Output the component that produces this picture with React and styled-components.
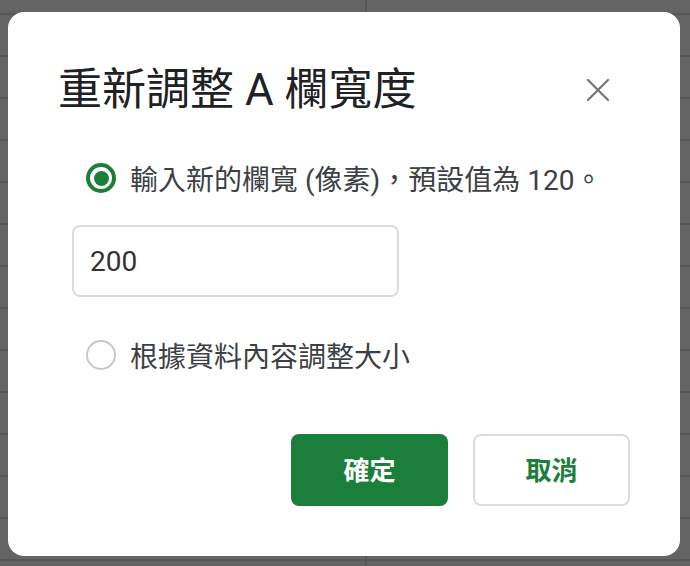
import React from 'react';
import styled, { createGlobalStyle } from 'styled-components';

const GlobalStyle = createGlobalStyle`
  html, body {
    margin: 0;
    padding: 0;
    height: 100%;
  }
  body {
    font-family: Roboto, "Noto Sans CJK TC", "Noto Sans", sans-serif;
  }
`;

const Backdrop = styled.div`
  width: 100vw;
  height: 100vh;
  box-sizing: border-box;
  padding: 12px 10px 10px 8px;
  display: flex;
  background-color: #646464;
  background-image:
    linear-gradient(to right, transparent 365px, #575757 365px, #575757 367px, transparent 367px),
    repeating-linear-gradient(to bottom, transparent 0, transparent 13px, #575757 13px, #575757 15px, transparent 15px, transparent 42px);
`;

const Dialog = styled.div`
  flex: 1;
  background: #ffffff;
  border-radius: 16px;
  box-sizing: border-box;
  padding: 52px 50px 50px;
  display: flex;
  flex-direction: column;
`;

const Header = styled.div`
  display: flex;
  align-items: center;
  justify-content: space-between;
  height: 52px;
  padding-right: 12px;
`;

const Title = styled.h1`
  margin: 0;
  font-size: 44px;
  font-weight: 400;
  line-height: 52px;
  color: #202124;
`;

const CloseButton = styled.button`
  width: 40px;
  height: 40px;
  border: none;
  background: none;
  padding: 0;
  display: flex;
  align-items: center;
  justify-content: center;
  color: #757575;
  cursor: pointer;
`;

const Option = styled.label`
  display: flex;
  align-items: center;
  gap: 14px;
  height: 40px;
  margin: ${({ top }) => top}px 0 0 28px;
  font-size: 28px;
  color: #3c4043;
  cursor: pointer;
`;

const RadioMark = styled.span`
  width: 30px;
  height: 30px;
  box-sizing: border-box;
  border-radius: 50%;
  border: ${({ checked }) => (checked ? '4px solid #1b7f3b' : '2px solid #c8c8c8')};
  display: flex;
  align-items: center;
  justify-content: center;
  flex-shrink: 0;

  &::after {
    content: '';
    width: 15px;
    height: 15px;
    border-radius: 50%;
    background: #1b7f3b;
    display: ${({ checked }) => (checked ? 'block' : 'none')};
  }
`;

const WidthInput = styled.input`
  width: 327px;
  height: 72px;
  box-sizing: border-box;
  margin: 27px 0 0 14px;
  border: 2px solid #dadce0;
  border-radius: 8px;
  padding: 0 16px;
  font-family: Roboto, "Noto Sans CJK TC", sans-serif;
  font-size: 28px;
  color: #333333;
  outline: none;
`;

const Actions = styled.div`
  display: flex;
  justify-content: flex-end;
  gap: 25px;
  margin-top: 59px;
`;

const ActionButton = styled.button`
  width: 157px;
  height: 72px;
  border-radius: 8px;
  box-sizing: border-box;
  padding: 0 0 3px;
  font-family: Roboto, "Noto Sans CJK TC", sans-serif;
  font-size: 26px;
  font-weight: 700;
  cursor: pointer;
  background: ${({ primary }) => (primary ? '#1b7f3b' : '#ffffff')};
  color: ${({ primary }) => (primary ? '#ffffff' : '#1b7f3b')};
  border: ${({ primary }) => (primary ? 'none' : '2px solid #dadce0')};
`;

function CloseIcon() {
  return (
    <svg width="22" height="22" viewBox="0 0 22 22" fill="none">
      <path d="M1 1L21 21M21 1L1 21" stroke="currentColor" strokeWidth="2.2" strokeLinecap="round" />
    </svg>
  );
}

export default function App() {
  const [mode, setMode] = React.useState('custom');
  const [width, setWidth] = React.useState('200');

  return (
    <>
      <GlobalStyle />
      <Backdrop>
        <Dialog>
          <Header>
            <Title>重新調整 A 欄寬度</Title>
            <CloseButton aria-label="關閉">
              <CloseIcon />
            </CloseButton>
          </Header>
          <Option top={42} onClick={() => setMode('custom')}>
            <RadioMark checked={mode === 'custom'} />
            輸入新的欄寬 (像素)，預設值為 120。
          </Option>
          <WidthInput value={width} onChange={(e) => setWidth(e.target.value)} />
          <Option top={38} onClick={() => setMode('fit')}>
            <RadioMark checked={mode === 'fit'} />
            根據資料內容調整大小
          </Option>
          <Actions>
            <ActionButton primary>確定</ActionButton>
            <ActionButton>取消</ActionButton>
          </Actions>
        </Dialog>
      </Backdrop>
    </>
  );
}
